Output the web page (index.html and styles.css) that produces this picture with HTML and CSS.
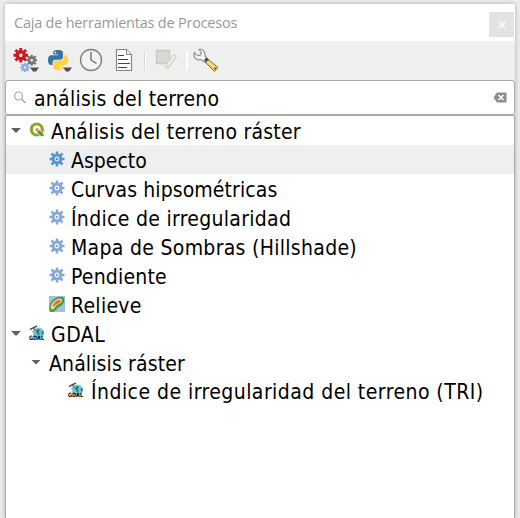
FILE: index.html
```html
<!DOCTYPE html>
<html lang="es">
<head>
<meta charset="utf-8">
<title>Caja de herramientas de Procesos</title>
<link rel="stylesheet" href="styles.css">
</head>
<body>
<svg class="defs" aria-hidden="true">
  <symbol id="gear" viewBox="-8 -8 16 16">
    <path stroke="currentColor" stroke-width="3" d="M0-7.500V-4M0 4V7.500M-7.500 0H-4M4 0H7.500M-5.500-5.500L-3-3M3 3L5.500 5.500M5.500-5.500L3-3M-3 3L-5.500 5.500"/>
    <circle r="3.700" fill="none" stroke="currentColor" stroke-width="3.600"/>
  </symbol>
  <symbol id="alg" viewBox="-8 -8 16 16">
    <path stroke="currentColor" stroke-width="2.500" d="M0-7.500V-4M0 4V7.500M-7.500 0H-4M4 0H7.500M-5.500-5.500L-3-3M3 3L5.500 5.500M5.500-5.500L3-3M-3 3L-5.500 5.500"/>
    <circle r="3.900" fill="none" stroke="currentColor" stroke-width="3"/>
    <circle r="1.300" fill="currentColor"/>
  </symbol>
</svg>
<main class="window">
  <header class="title"><span>Caja de herramientas de Procesos</span>
    <button class="close" aria-label="Cerrar"><svg width="8" height="8" viewBox="0 0 8 8"><path d="M1 1L7 7M7 1L1 7" stroke="#f7f7f7" stroke-width="1.800"/></svg></button>
  </header>
  <nav class="toolbar">
    <svg class="models" width="28" height="28" viewBox="12 46 28 28">
      <use href="#gear" x="13" y="47.500" width="15.500" height="15.500" color="#cf171d"/>
      <use href="#gear" x="26" y="54.500" width="11.500" height="11.500" color="#757575"/>
      <use href="#gear" x="20" y="62.500" width="10" height="10" color="#8faedb"/>
      <path d="M30 67.500H39L36 71.500H33Z" fill="#505050"/>
    </svg>
    <svg class="python" width="26" height="28" viewBox="47 46 26 28">
      <g transform="translate(48 50) scale(.84)">
        <path fill="#3673a5" fill-rule="evenodd" d="M11.900 0C5.800 0 6.200 2.600 6.200 2.600V5.400H12V6.200H3.900S0 5.800 0 11.900S3.400 17.800 3.400 17.800H5.400V14.900S5.300 11.500 8.800 11.500H14.600S17.800 11.600 17.800 8.400V3.100S18.300 0 11.900 0ZM8.700 1.800A1.100 1.100 0 1 1 8.700 4A1.100 1.100 0 0 1 8.700 1.800Z"/>
        <path transform="rotate(180 12 12)" fill="#ffd343" fill-rule="evenodd" d="M11.900 0C5.800 0 6.200 2.600 6.200 2.600V5.400H12V6.200H3.900S0 5.800 0 11.900S3.400 17.800 3.400 17.800H5.400V14.900S5.300 11.500 8.800 11.500H14.600S17.800 11.600 17.800 8.400V3.100S18.300 0 11.900 0ZM8.700 1.800A1.100 1.100 0 1 1 8.700 4A1.100 1.100 0 0 1 8.700 1.800Z"/>
      </g>
      <path d="M63 67.500H72L69 71.500H66Z" fill="#505050"/>
    </svg>
    <svg class="clock" width="24" height="24" viewBox="0 0 24 24" fill="none">
      <circle cx="12" cy="12" r="10.500" fill="#f2f4f4" stroke="#7d7f7f" stroke-width="1.300"/>
      <path d="M12 2V4M12 20V22M2 12H4M20 12H22" stroke="#d5d8d8"/>
      <path d="M12 4V12L17.500 15.500" stroke="#666" stroke-width="1.300"/>
    </svg>
    <svg class="document" width="18" height="24" viewBox="0 0 18 24">
      <path d="M1.500 1.500H11.500L16.500 6.500V22.500H1.500Z" fill="#fff" stroke="#888" stroke-width="1.200"/>
      <path d="M11.500 1.500V6.500H16.500" fill="#eee" stroke="#888"/>
      <path d="M3 7.500H9M3 11.500H13M3 15.500H15M3 19.500H12" stroke="#444" stroke-width="1.200"/>
    </svg>
    <i class="separator"></i>
    <svg class="edit" width="23" height="24" viewBox="0 0 23 24">
      <path d="M1.500 2.500H14.500V15.500H1.500Z" fill="#dbd8cf" stroke="#c9c7c0" stroke-width="1.300"/>
      <path d="M10 22L11.500 16L18.500 6.500L21.500 8.500L14.500 19Z" fill="#dededb" stroke="#d0d0cb"/>
      <path d="M12.500 17L19.500 8M10 22L12 20" stroke="#f3f3f1" stroke-width="1.300"/>
    </svg>
    <i class="separator second"></i>
    <svg class="wrench" width="26" height="25" viewBox="0 0 26 25">
      <path d="M6 1.500L8.500 4.500L7 7.500L3.500 7L1.500 4.500C-.5 9.500 3.500 13 8 11.500L12 14.500L15 11.500L12 8C12.500 4 10 .5 6 1.500Z" fill="#f3f3f1" stroke="#888" stroke-width="1.100"/>
      <path d="M11 12L13.500 9.500L16 12L13.500 14.500Z" fill="#444"/>
      <path d="M13 15Q13 12 16 12L25 19.500L21.500 23.500Z" fill="#edca61" stroke="#806930" stroke-width=".9"/>
      <path d="M15.500 14L21.500 19.500" stroke="#fae49a" stroke-width="1.500"/>
      <circle cx="22" cy="20.500" r=".9" fill="#5c4a22"/>
    </svg>
  </nav>
  <section class="search">
    <svg width="14" height="14" viewBox="0 0 14 14" fill="none" stroke="#aaa" stroke-width="1.200"><circle cx="5.500" cy="5" r="4"/><path d="M8.500 8L12.500 12" stroke-width="1.600"/></svg>
    <span class="query">análisis del terreno</span>
    <svg class="clear" width="14" height="11" viewBox="0 0 14 11"><path d="M4 .5H13.500V10.500H4L.5 5.500Z" fill="#8e8e8e"/><path d="M5.500 3L10.500 8M10.500 3L5.500 8" stroke="#fff" stroke-width="1.500"/></svg>
  </section>
  <section class="tree">
    <div class="row group"><i class="arrow"></i>
      <svg class="icon" viewBox="0 0 16 16"><circle cx="7.800" cy="7.500" r="5.500" fill="none" stroke="#87aa2e" stroke-width="3.200"/><path d="M8 8H11L15 12V14.500H12L8 11Z" fill="#649b32" stroke="#fff" stroke-width=".7"/><circle cx="8" cy="7.500" r="1.600" fill="#ed8b35"/></svg>
      <span class="label t1">Análisis del terreno ráster</span></div>
    <div class="row item selected"><svg class="icon"><use href="#alg"/></svg><span class="label">Aspecto</span></div>
    <div class="row item"><svg class="icon"><use href="#alg"/></svg><span class="label t3">Curvas hipsométricas</span></div>
    <div class="row item"><svg class="icon"><use href="#alg"/></svg><span class="label t4">Índice de irregularidad</span></div>
    <div class="row item"><svg class="icon"><use href="#alg"/></svg><span class="label t5">Mapa de Sombras (Hillshade)</span></div>
    <div class="row item"><svg class="icon"><use href="#alg"/></svg><span class="label t6">Pendiente</span></div>
    <div class="row item">
      <svg class="icon" viewBox="0 0 16 16"><path d="M0 0H16V16H0Z" fill="#9fbfe4"/><path d="M1 15C-1 7 4 2 10 1C15 0 16 3 15 6C13 11 9 10 7 14C5 16 2 17 1 15Z" fill="#4f9637"/><path d="M2 13C1 7 6 3 11 2.500C15 3 13 7 10 8C6 9 6 15 2 13Z" fill="#edda7b"/><path d="M4 10C5 6 8 4 11 4C13 5 11 7 8 8C6 9 5 12 4 10Z" fill="#d9656c"/></svg>
      <span class="label t7">Relieve</span></div>
    <div class="row group"><i class="arrow"></i>
      <svg class="icon" viewBox="0 0 16 16"><circle cx="9.500" cy="8" r="5.500" fill="#6fc4e2"/><path d="M7 5L10 4L11 6L9.500 7L11 9L9 10L7.500 8ZM13 6L15 7L14 10L12.500 8Z" fill="#3c7b51"/><path d="M1 4.500L8 1" stroke="#555" stroke-width="1.500"/><path d="M4.500 3L6 5.500" stroke="#555" stroke-width="1.300"/><path d="M3 6.500Q5 7.500 6.500 5.500" fill="none" stroke="#888" stroke-width=".8"/><text x="0" y="15" textLength="15" lengthAdjust="spacingAndGlyphs" class="gdal-text">GDAL</text></svg>
      <span class="label t8">GDAL</span></div>
    <div class="row short subgroup"><i class="arrow"></i><span class="label t9">Análisis ráster</span></div>
    <div class="row short leaf">
      <svg class="icon" viewBox="0 0 16 16"><circle cx="9.500" cy="8" r="5.500" fill="#6fc4e2"/><path d="M7 5L10 4L11 6L9.500 7L11 9L9 10L7.500 8ZM13 6L15 7L14 10L12.500 8Z" fill="#3c7b51"/><path d="M1 4.500L8 1" stroke="#555" stroke-width="1.500"/><path d="M4.500 3L6 5.500" stroke="#555" stroke-width="1.300"/><path d="M3 6.500Q5 7.500 6.500 5.500" fill="none" stroke="#888" stroke-width=".8"/><text x="0" y="15" textLength="15" lengthAdjust="spacingAndGlyphs" class="gdal-text">GDAL</text></svg>
      <span class="label t10">Índice de irregularidad del terreno (TRI)</span></div>
  </section>
</main>
</body>
</html>
```
FILE: styles.css
```css
* { box-sizing: border-box; }
body { margin: 0; height: 518px; overflow: hidden; padding: 4px 5px 0; background: #ededed; font-family: "DejaVu Sans Condensed", "DejaVu Sans", sans-serif; font-stretch: condensed; font-size: 21px; color: #000; }
.defs { display: none; }
.window { height: 514px; display: flex; flex-direction: column; background: #efefef; box-shadow: 0 0 5px #aaa; }
.title { height: 37px; flex: none; display: flex; justify-content: space-between; padding: 8px 1px 0 9px; background: #fff; font: 14.5px/22px "Open Sans", "Noto Sans", sans-serif; letter-spacing: -.22px; color: #999; }
.close { width: 25px; height: 25px; padding: 0; border: 0; display: grid; place-items: center; background: #e3e3e3; }
.toolbar { height: 39px; flex: none; display: flex; align-items: center; padding: 0 0 1px 7px; }
.python { margin-left: 7px; }
.clock { margin-left: 6px; }
.document { margin-left: 12px; }
.separator { width: 1px; height: 19px; margin-left: 11px; background: #d8d8d8; box-shadow: 1px 0 #fff; }
.edit { margin-left: 10px; }
.separator.second { margin-left: 8px; background: #fff; }
.wrench { margin-left: 6px; }
.search { height: 35px; flex: none; display: flex; align-items: center; padding: 0 7px; border: 1px solid #aaa; border-radius: 3px; background: #fff; line-height: 32px; }
.query { margin-left: 7px; padding-top: 2px; white-space: nowrap; letter-spacing: .25px; }
.clear { margin-left: auto; }
.tree { flex: 1; border: solid #aaa; border-width: 1px 1px 0; background: #fff; }
.row { height: 29px; display: flex; align-items: center; white-space: nowrap; line-height: 29px; }
.row.short { height: 28px; line-height: 28px; }
.label { padding-top: 3px; }
.group { padding-left: 5px; }
.item { padding-left: 43px; }
.subgroup { padding-left: 25px; }
.leaf { padding-left: 62px; }
.leaf .icon { margin-right: 7px; }
.selected { background: #efefef; }
.icon { width: 16px; height: 16px; flex: none; overflow: visible; color: #86a9d7; margin-top: -1px; margin-right: 6px; }
.selected .icon { color: #5594d2; }
.arrow { width: 10px; height: 5px; flex: none; margin-right: 8px; background: #606060; clip-path: polygon(0 0, 100% 0, 50% 100%); }
.gdal-text { font: bold 6px "DejaVu Sans Condensed", sans-serif; }
.t1 { letter-spacing: .23px; }
.t3 { letter-spacing: .1px; }
.t4 { letter-spacing: .3px; }
.t5 { letter-spacing: .3px; }
.t6 { letter-spacing: .2px; }
.t7 { letter-spacing: .28px; }
.t8 { letter-spacing: .5px; }
.t9 { letter-spacing: .13px; }
.t10 { letter-spacing: .45px; }
```
